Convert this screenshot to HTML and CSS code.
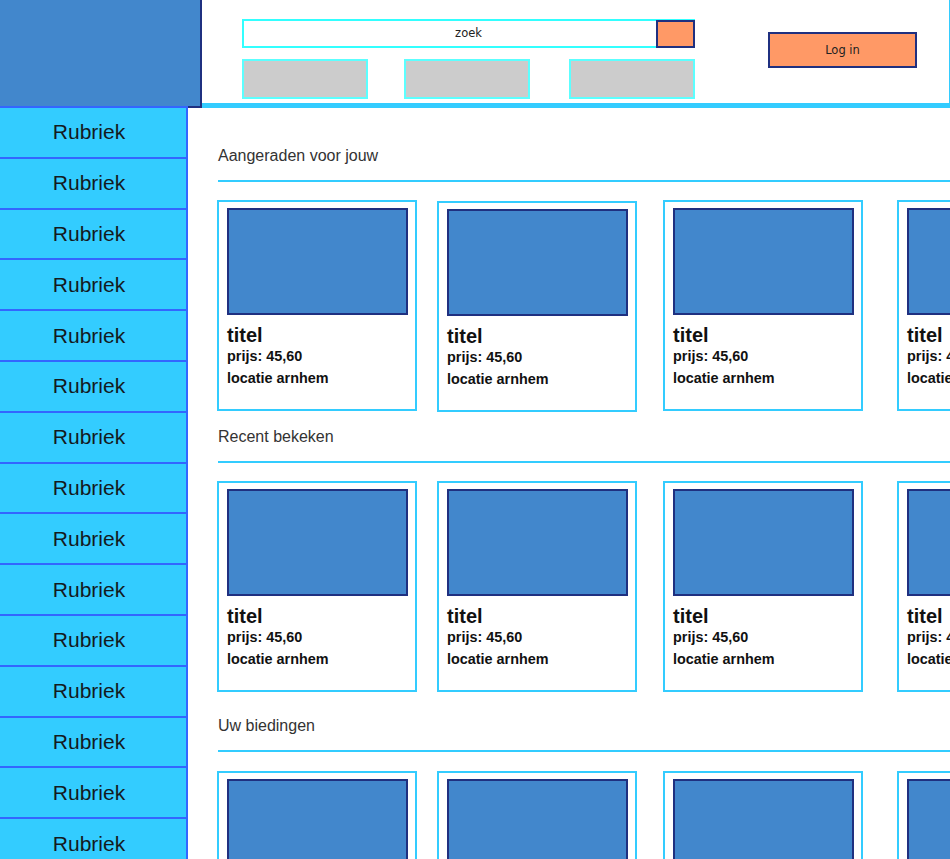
FILE: index.html
```html
<!DOCTYPE html>
<html lang="nl">
<head>
<meta charset="utf-8">
<title>Marktplaats</title>
<link rel="stylesheet" href="styles.css">
</head>
<body>
<div class="top">
  <div class="logo"></div>
  <header class="header">
    <div class="search-col">
      <div class="search">zoek<span class="search-btn"></span></div>
      <nav class="nav">
        <span class="nav-item"></span>
        <span class="nav-item"></span>
        <span class="nav-item"></span>
      </nav>
    </div>
    <button class="login">Log in</button>
  </header>
</div>
<div class="body">
  <aside class="sidebar">
    <div class="rub">Rubriek</div>
    <div class="rub">Rubriek</div>
    <div class="rub">Rubriek</div>
    <div class="rub">Rubriek</div>
    <div class="rub">Rubriek</div>
    <div class="rub">Rubriek</div>
    <div class="rub">Rubriek</div>
    <div class="rub">Rubriek</div>
    <div class="rub">Rubriek</div>
    <div class="rub">Rubriek</div>
    <div class="rub">Rubriek</div>
    <div class="rub">Rubriek</div>
    <div class="rub">Rubriek</div>
    <div class="rub">Rubriek</div>
    <div class="rub">Rubriek</div>
    <div class="rub">Rubriek</div>
  </aside>
  <main class="main">
    <section class="sec sec-1">
      <h2 class="sec-title">Aangeraden voor jouw</h2>
      <div class="cards">
        <div class="card"><div class="pic"></div><div class="t">titel</div><div class="p">prijs: 45,60</div><div class="l">locatie arnhem</div></div>
        <div class="card card-low"><div class="pic"></div><div class="t">titel</div><div class="p">prijs: 45,60</div><div class="l">locatie arnhem</div></div>
        <div class="card"><div class="pic"></div><div class="t">titel</div><div class="p">prijs: 45,60</div><div class="l">locatie arnhem</div></div>
        <div class="card"><div class="pic"></div><div class="t">titel</div><div class="p">prijs: 45,60</div><div class="l">locatie arnhem</div></div>
      </div>
    </section>
    <section class="sec sec-2">
      <h2 class="sec-title">Recent bekeken</h2>
      <div class="cards">
        <div class="card"><div class="pic"></div><div class="t">titel</div><div class="p">prijs: 45,60</div><div class="l">locatie arnhem</div></div>
        <div class="card"><div class="pic"></div><div class="t">titel</div><div class="p">prijs: 45,60</div><div class="l">locatie arnhem</div></div>
        <div class="card"><div class="pic"></div><div class="t">titel</div><div class="p">prijs: 45,60</div><div class="l">locatie arnhem</div></div>
        <div class="card"><div class="pic"></div><div class="t">titel</div><div class="p">prijs: 45,60</div><div class="l">locatie arnhem</div></div>
      </div>
    </section>
    <section class="sec sec-3">
      <h2 class="sec-title">Uw biedingen</h2>
      <div class="cards">
        <div class="card"><div class="pic"></div><div class="t">titel</div><div class="p">prijs: 45,60</div><div class="l">locatie arnhem</div></div>
        <div class="card"><div class="pic"></div><div class="t">titel</div><div class="p">prijs: 45,60</div><div class="l">locatie arnhem</div></div>
        <div class="card"><div class="pic"></div><div class="t">titel</div><div class="p">prijs: 45,60</div><div class="l">locatie arnhem</div></div>
        <div class="card"><div class="pic"></div><div class="t">titel</div><div class="p">prijs: 45,60</div><div class="l">locatie arnhem</div></div>
      </div>
    </section>
  </main>
</div>
</body>
</html>
```
FILE: styles.css
```css
html, body {
  margin: 0;
  padding: 0;
  background: #ffffff;
}
body {
  font-family: "Liberation Sans", Arial, sans-serif;
  overflow-x: hidden;
}

.top {
  display: flex;
  align-items: flex-start;
}
.logo {
  width: 200px;
  height: 106px;
  flex: none;
  background: #4287cc;
  border-right: 2px solid #1f3080;
  border-bottom: 2px solid #1f3080;
}
.header {
  flex: 1;
  height: 84px;
  padding: 19px 0 0 40px;
  border-bottom: 5px solid #33ccff;
  border-right: 1px solid #33ccff;
  display: flex;
  align-items: flex-start;
}
.search-col {
  width: 453px;
  display: flex;
  flex-direction: column;
}
.search {
  position: relative;
  height: 25px;
  border: 2px solid #33ffff;
  text-align: center;
  line-height: 25px;
  font-family: "DejaVu Sans", sans-serif;
  font-size: 11.5px;
  color: #222222;
}
.search-btn {
  position: absolute;
  top: -1px;
  right: -2px;
  width: 35px;
  height: 24px;
  border: 2px solid #1f3080;
  background: #ff9966;
}
.nav {
  margin-top: 11px;
  display: flex;
}
.nav-item {
  display: block;
  width: 122px;
  height: 36px;
  border: 2px solid #5cffff;
  background: #cccccc;
}
.nav-item:nth-child(2) { margin-left: 36px; }
.nav-item:nth-child(3) { margin-left: 39px; }
.login {
  margin: 13px 0 0 73px;
  width: 149px;
  height: 36px;
  padding: 0;
  border: 2px solid #1f3080;
  background: #ff9966;
  font-family: "DejaVu Sans", sans-serif;
  font-size: 11.5px;
  color: #222222;
  text-align: center;
}

.body {
  display: flex;
  align-items: flex-start;
}
.sidebar {
  width: 186px;
  flex: none;
  margin-top: -2px;
  background: #33ccff;
  border-right: 2px solid #3366ff;
}
.rub {
  height: 48.8px;
  border-top: 2px solid #3366ff;
  padding-right: 8px;
  display: flex;
  align-items: center;
  justify-content: center;
  font-size: 21px;
  color: #141a1e;
}

.main {
  flex: 1;
  min-width: 0;
  overflow: hidden;
  padding-left: 30px;
}
.sec-title {
  margin: 0;
  font-size: 16px;
  font-weight: normal;
  line-height: 18px;
  color: #333333;
  padding-bottom: 15px;
  border-bottom: 2px solid #33ccff;
}
.sec-1 { margin-top: 39px; }
.sec-2 { margin-top: 16px; }
.sec-3 { margin-top: 25px; }

.cards {
  display: flex;
  align-items: flex-start;
  margin-top: 18px;
  margin-left: -1px;
}
.sec-3 .cards { margin-top: 19px; }
.card {
  flex: none;
  width: 188px;
  padding: 6px 0 21px 8px;
  border: 2px solid #33ccff;
  color: #111111;
  font-weight: bold;
}
.card-low { margin-top: 1px; }
.card:nth-child(1) { margin-right: 20px; }
.card:nth-child(2) { margin-right: 26px; }
.card:nth-child(3) { margin-right: 34px; }
.pic {
  width: 177px;
  height: 103px;
  border: 2px solid #1f3080;
  background: #4287cc;
  margin-bottom: 9px;
}
.t {
  font-size: 20px;
  line-height: 22px;
}
.p {
  font-size: 14.4px;
  line-height: 20px;
}
.l {
  font-size: 14.4px;
  line-height: 20px;
  margin-top: 2px;
}
```
